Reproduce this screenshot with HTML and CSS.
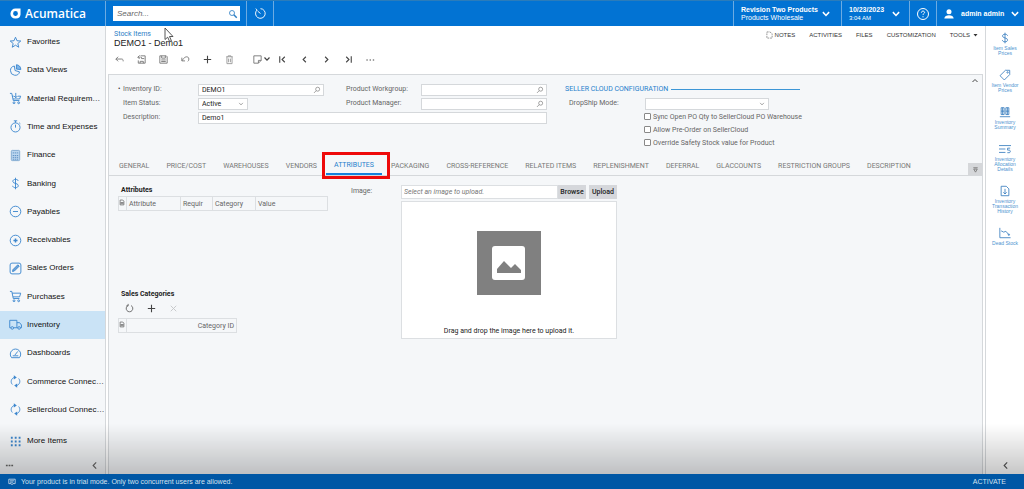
FILE: index.html
```html
<!DOCTYPE html>
<html lang="en">
<head>
<meta charset="utf-8">
<title>DEMO1 - Demo1 | Stock Items</title>
<link rel="stylesheet" href="styles.css">
</head>
<body>
<svg class="sprite" aria-hidden="true">
  <symbol id="chev-down" viewBox="0 0 8 8"><path d="M1.5 2.5 4 5.2l2.5-2.7"/></symbol>
  <symbol id="chev-left" viewBox="0 0 8 8"><path d="M5.5 1.2 2.8 4l2.7 2.8"/></symbol>
  <symbol id="lens" viewBox="0 0 12 12"><circle cx="7" cy="4.8" r="3"/><path d="M4.8 7 1.5 10.4"/></symbol>
  <symbol id="cart" viewBox="0 0 14 14"><path d="M1 1.5h2l1.6 7.7h6.6M3.4 3.4h9.2l-1.2 4H4.3"/><circle cx="5.4" cy="11.6" r="1"/><circle cx="10.4" cy="11.6" r="1"/></symbol>
  <symbol id="dollar" viewBox="0 0 14 14"><path d="M10 4.3C9.6 3 8.500 2.600 7 2.600c-1.700 0-2.900.8-2.900 2.100C4.100 7.600 10 6.200 10 9.300c0 1.300-1.200 2.200-3 2.200S4.200 10.800 3.900 9.500M7 .8v12.400"/></symbol>
  <symbol id="sync" viewBox="0 0 14 14"><path d="M3.600 10.200A4.600 4.600 0 0 1 5.800 2.600M10.400 3.800a4.600 4.600 0 0 1-2.200 7.600"/><path class="solid" d="M5.200.4 8.400 2.600 5.200 4.800zM8.800 9.200 5.600 11.400l3.200 2.200z"/></symbol>
  <symbol id="plus" viewBox="0 0 12 12"><path d="M6 2v8M2 6h8"/></symbol>
  <symbol id="grid-file" viewBox="0 0 8 8"><path d="M1.500.7h3.500l1.500 1.500v5h-5zM2 4h4M2 5.500h4"/></symbol>
</svg>

<header class="topbar">
  <a class="brand" href="#">
    <svg class="brand-mark" viewBox="0 0 12 12"><path d="M6 .5h5.500V7A5 5 0 0 1 6.500 11.500h-1A5 5 0 0 1 .5 6.500V6A5.500 5.500 0 0 1 6 .5zM6 3.400A2.600 2.600 0 0 0 3.400 6v.3A2.300 2.300 0 0 0 5.700 8.600h.6A2.300 2.300 0 0 0 8.600 6.300V6A2.600 2.600 0 0 0 6 3.400z" fill="#fff" fill-rule="evenodd"/></svg>
    <span>Acumatica</span>
  </a>
  <div class="search-cell">
    <label class="search">
      <input type="text" placeholder="Search..." aria-label="Search">
      <svg class="ic" viewBox="0 0 12 12"><circle cx="4.800" cy="4.800" r="3"/><path d="M7 7l3.500 3.500" stroke-width="1.800"/></svg>
    </label>
  </div>
  <button class="top-cell history" aria-label="History"><svg class="ic" viewBox="0 0 14 14"><path d="M3.300 3.200A5.200 5.200 0 1 0 7 1.800M7 7 4 4.500M1.800 1.800l1.700 1.500"/></svg></button>
  <div class="spacer"></div>
  <button class="top-cell company"><span class="two-line"><b>Revision Two Products</b><span>Products Wholesale</span></span><svg class="ic chev"><use href="#chev-down"/></svg></button>
  <button class="top-cell clock"><span class="two-line"><b>10/23/2023</b><span>3:04 AM</span></span><svg class="ic chev"><use href="#chev-down"/></svg></button>
  <button class="top-cell help" aria-label="Help"><svg class="ic" viewBox="0 0 14 14"><circle cx="7" cy="7" r="5.500"/><path d="M5.400 5.700c0-1 .7-1.600 1.600-1.600s1.600.6 1.600 1.400c0 1-1.600 1.200-1.600 2.400M7 9.200v1.100"/></svg></button>
  <button class="top-cell user"><svg class="ic person" viewBox="0 0 12 12"><circle cx="6" cy="3.700" r="2.500" fill="#fff"/><path d="M1.300 10.500c0-4.500 9.400-4.500 9.400 0z" fill="#fff"/></svg><b>admin admin</b><svg class="ic chev"><use href="#chev-down"/></svg></button>
</header>

<div class="workspace">
  <nav class="sidebar">
    <div class="side-list">
      <a href="#"><svg class="ic" viewBox="0 0 14 14"><path d="m7 1.300 1.600 3.800 4.100.3-3.200 2.700 1 4L7 9.900l-3.500 2.200 1-4-3.200-2.700 4.100-.3z"/></svg><span>Favorites</span></a>
      <a href="#"><svg class="ic" viewBox="0 0 14 14"><path d="M5.800 2.200a5 5 0 1 0 5.600 6.300L6.500 7z"/><path d="M8 .8a5 5 0 0 1 4.700 5.200L8 5.500z" fill="#7db5ea"/></svg><span>Data Views</span></a>
      <a href="#"><svg class="ic" viewBox="0 0 14 14"><path d="M1 1.500h2l1.600 7.700h6.600M3.400 4.500h1.600M9.500 4.500h3.100l-1.200 3H4.300M7.300 1v5M5.500 4.300l1.800 1.900 1.800-1.900"/><circle cx="5.400" cy="11.600" r="1"/><circle cx="10.400" cy="11.600" r="1"/></svg><span>Material Requirem…</span></a>
      <a href="#"><svg class="ic" viewBox="0 0 14 14"><circle cx="7" cy="8" r="4.900"/><path d="M5.200.9h3.600M7 1v2M7 5v3.200M11 3l1.200 1"/></svg><span>Time and Expenses</span></a>
      <a href="#"><svg class="ic" viewBox="0 0 14 14"><rect x="2.500" y="1.500" width="9" height="11" rx="1" fill="#bcd6ef" stroke="#7fa9d0"/><path d="M4 4.200h6M4 7h6M4 9h6M4 11h6" stroke="#5c90c4" stroke-dasharray="1.500 .7"/></svg><span>Finance</span></a>
      <a href="#"><svg class="ic"><use href="#dollar"/></svg><span>Banking</span></a>
      <a href="#"><svg class="ic" viewBox="0 0 14 14"><circle cx="7" cy="7" r="5.700"/><path d="M4.300 7h5.400"/></svg><span>Payables</span></a>
      <a href="#"><svg class="ic" viewBox="0 0 14 14"><circle cx="7" cy="7" r="5.700"/><path d="M4.800 7h4.400M7 4.800v4.400" stroke-width="1.600"/></svg><span>Receivables</span></a>
      <a href="#"><svg class="ic" viewBox="0 0 14 14"><rect x="1.200" y="1.200" width="11.600" height="11.600" rx="2"/><path d="m3.800 10.200.5-2L9.500 3l1.500 1.500-5.200 5.200z" fill="#6fa4d8"/></svg><span>Sales Orders</span></a>
      <a href="#"><svg class="ic"><use href="#cart"/></svg><span>Purchases</span></a>
      <a href="#" class="current"><svg class="ic" viewBox="0 0 14 14"><path d="M2 10.500H.8v-8h7.700v8H5M8.500 5h2.900l2 2.500v3h-1M8.500 10.500h1"/><circle cx="3.500" cy="10.700" r="1.400"/><circle cx="10.900" cy="10.700" r="1.400"/></svg><span>Inventory</span></a>
      <a href="#"><svg class="ic" viewBox="0 0 14 14"><path d="M2.800 11.500a5.600 5.600 0 1 1 8.400 0zM6.300 8.700l3.200-4M4 9.500h6"/></svg><span>Dashboards</span></a>
      <a href="#"><svg class="ic"><use href="#sync"/></svg><span>Commerce Connec…</span></a>
      <a href="#"><svg class="ic"><use href="#sync"/></svg><span>Sellercloud Connec…</span></a>
    </div>
    <a href="#" class="more"><svg class="ic" viewBox="0 0 14 14"><path d="M2 3h11M2 7h11M2 11h11" stroke-width="2" stroke-dasharray="2 2.200"/></svg><span>More Items</span></a>
    <div class="side-foot">
      <button aria-label="Menu options"><svg class="ic" viewBox="0 0 10 8"><path d="M1 4h8" stroke-width="1.800" stroke-dasharray="2 1"/></svg></button>
      <button aria-label="Collapse menu"><svg class="ic"><use href="#chev-left"/></svg></button>
    </div>
  </nav>

  <main class="main">
    <div class="page-head">
      <div class="titles">
        <a href="#">Stock Items</a>
        <h1>DEMO1 - Demo1</h1>
      </div>
      <div class="page-menu">
        <button class="notes"><svg class="ic" viewBox="0 0 8 8"><path d="M1 .5h3.500l2.500 2v5H1z" stroke-dasharray="2 1"/></svg>NOTES</button>
        <button>ACTIVITIES</button>
        <button>FILES</button>
        <button>CUSTOMIZATION</button>
        <button class="tools">TOOLS <svg class="ic" viewBox="0 0 7 8"><path class="solid" d="M1.500 3h4L3.500 5.500z"/></svg></button>
      </div>
      <svg class="pointer" viewBox="0 0 10 16"><path d="M1 1v11.500l2.700-2.300 1.900 4.300 1.800-.8-1.900-4.200H9z" fill="#fff" stroke="#444" stroke-width=".9"/></svg>
    </div>

    <div class="toolbar">
      <button aria-label="Back"><svg class="ic" viewBox="0 0 12 12"><path d="M4.500 3 2 5.500 4.500 8M2 5.500h6.500c1 0 1.500.7 1.500 2.500"/></svg></button>
      <button aria-label="Save and close"><svg class="ic" viewBox="0 0 12 12"><path d="M5 2h5v8H2.500V7M6 3.500v1.500h3M4.500 10V8h3.500v2M4 1.500 2 3.500l2 2M2 3.500h3"/></svg></button>
      <button aria-label="Save"><svg class="ic" viewBox="0 0 12 12"><path d="M2 2h7l1 1v7H2zM4 2v2.500h4V2M3.500 6.500h5M3.500 8.200h5"/></svg></button>
      <button aria-label="Undo"><svg class="ic" viewBox="0 0 12 12"><path d="M2 4v3.500h3.500M2.300 7.300C5 2 9.500 2 9.700 5.500c0 1.200-.5 2-1.200 2.500"/></svg></button>
      <button aria-label="Add"><svg class="ic strong"><use href="#plus"/></svg></button>
      <button aria-label="Delete"><svg class="ic pale" viewBox="0 0 12 12"><path d="M2.500 3h7M4.500 3V2h3v1M3.200 3v7.500h5.600V3M5 5v4M7 5v4"/></svg></button>
      <button class="wide" aria-label="Clipboard"><svg class="ic" viewBox="0 0 12 12"><path d="M2 2h8v5l-3 3H2zM10 7H7v3"/></svg><svg class="ic tiny strong"><use href="#chev-down"/></svg></button>
      <button aria-label="First"><svg class="ic strong" viewBox="0 0 12 12"><path d="M3 2.500v7M8.500 3l-3 3 3 3"/></svg></button>
      <button aria-label="Previous"><svg class="ic strong" viewBox="0 0 12 12"><path d="m7.500 3-3 3 3 3"/></svg></button>
      <button aria-label="Next"><svg class="ic strong" viewBox="0 0 12 12"><path d="m4.500 3 3 3-3 3"/></svg></button>
      <button aria-label="Last"><svg class="ic strong" viewBox="0 0 12 12"><path d="M9 2.500v7M3.500 3l3 3-3 3"/></svg></button>
      <button aria-label="More"><svg class="ic strong" viewBox="0 0 12 12"><path d="M1.500 6.500h9" stroke-dasharray="1.500 2"/></svg></button>
    </div>

    <section class="panel">
      <form class="summary">
        <div class="fields">
          <label for="inv" class="required">Inventory ID:</label>
          <span class="field"><input id="inv" type="text" value="DEMO1"><svg class="ic"><use href="#lens"/></svg></span>
          <label for="wg" class="second">Product Workgroup:</label>
          <span class="field"><input id="wg" type="text"><svg class="ic"><use href="#lens"/></svg></span>
          <label for="st">Item Status:</label>
          <span class="field short"><select id="st"><option>Active</option></select><svg class="ic arrow"><use href="#chev-down"/></svg></span>
          <label for="pm" class="second">Product Manager:</label>
          <span class="field"><input id="pm" type="text"><svg class="ic"><use href="#lens"/></svg></span>
          <label for="ds">Description:</label>
          <span class="field full"><input id="ds" type="text" value="Demo1"></span>
        </div>
        <div class="seller">
          <h2>SELLER CLOUD CONFIGURATION</h2>
          <div class="drop"><label for="dm">DropShip Mode:</label><span class="field"><select id="dm"><option></option></select><svg class="ic arrow"><use href="#chev-down"/></svg></span></div>
          <div class="checks">
            <label><input type="checkbox">Sync Open PO Qty to SellerCloud PO Warehouse</label>
            <label><input type="checkbox">Allow Pre-Order on SellerCloud</label>
            <label><input type="checkbox">Override Safety Stock value for Product</label>
          </div>
        </div>
        <button type="button" class="fold" aria-label="Collapse summary"><svg class="ic" viewBox="0 0 8 8"><path d="M1.500 5 4 2.500 6.500 5"/></svg></button>
      </form>

      <div class="tabs">
        <button>GENERAL</button><button>PRICE/COST</button><button>WAREHOUSES</button><button>VENDORS</button><button class="active">ATTRIBUTES<span class="marker"></span></button><button>PACKAGING</button><button>CROSS-REFERENCE</button><button>RELATED ITEMS</button><button>REPLENISHMENT</button><button>DEFERRAL</button><button>GLACCOUNTS</button><button>RESTRICTION GROUPS</button><button>DESCRIPTION</button>
        <button class="tab-list" aria-label="All tabs"><svg class="ic" viewBox="0 0 8 8"><path d="M1.500 2h5M2 3.500h4L4 7z"/></svg></button>
      </div>

      <div class="content">
        <div class="lists">
          <h3>Attributes</h3>
          <table class="attributes">
            <thead><tr><th class="mark"><svg class="ic"><use href="#grid-file"/></svg></th><th class="a">Attribute</th><th class="r">Requir</th><th class="c">Category</th><th>Value</th></tr></thead>
          </table>
          <h3 class="sales">Sales Categories</h3>
          <div class="mini-tools">
            <button aria-label="Refresh"><svg class="ic" viewBox="0 0 12 12"><path d="M4.300 2.800a3.600 3.600 0 1 0 3.400 0M4.500 1v2.200H2.500"/></svg></button>
            <button aria-label="Add row"><svg class="ic strong"><use href="#plus"/></svg></button>
            <button aria-label="Delete row" disabled><svg class="ic" viewBox="0 0 12 12"><path d="m3 3 6 6M9 3 3 9"/></svg></button>
          </div>
          <table class="categories">
            <thead><tr><th class="mark"><svg class="ic"><use href="#grid-file"/></svg></th><th class="id">Category ID</th></tr></thead>
          </table>
        </div>
        <label class="image-label" for="img">Image:</label>
        <div class="uploader">
          <div class="upload-row">
            <input id="img" type="text" placeholder="Select an image to upload.">
            <button>Browse</button>
            <button class="upload">Upload</button>
          </div>
          <div class="dropzone">
            <svg class="picture" viewBox="0 0 64 64"><path fill="#808080" d="M0 0h64v64H0z"/><rect x="15" y="15" width="33" height="34" rx="3" fill="#fff"/><path fill="#808080" d="M20 42v-4l7-8 7 7 4-4 6 6v3z"/></svg>
            <p>Drag and drop the image here to upload it.</p>
          </div>
        </div>
      </div>
    </section>
  </main>

  <aside class="rail">
    <a href="#"><svg class="ic"><use href="#dollar"/></svg><span>Item Sales Prices</span></a>
    <a href="#"><svg class="ic" viewBox="0 0 14 14"><path d="M1.200 7.800 7.500 1.500h5v5L6.200 12.800z"/><circle cx="10" cy="4" r=".8"/></svg><span>Item Vendor Prices</span></a>
    <a href="#"><svg class="ic" viewBox="0 0 14 14"><path d="M1 12.500h12M2.500 2h3.500v8H2.500zM8 2h3.500v8H8zM2.500 6h3.500M8 6h3.500M4.200 2v8M9.800 2v8"/></svg><span>Inventory Summary</span></a>
    <a href="#"><svg class="ic" viewBox="0 0 14 14"><path d="M0 3h14M0 7h7.500M0 11h7.500M13 6h-3v2.300h2c1.600 0 1.600 3 0 3h-2.300"/></svg><span>Inventory Allocation Details</span></a>
    <a href="#"><svg class="ic" viewBox="0 0 14 14"><path d="M2.500 1.500h6l3 3v8h-9zM7 4.500v6M5 8.500l2 2 2-2"/></svg><span>Inventory Transaction History</span></a>
    <a href="#"><svg class="ic" viewBox="0 0 14 14"><path d="M1 1v11.500h12.500M2.500 4.500l3 1.500 2.500-1 3.500 4"/><circle cx="11.500" cy="9" r=".8"/></svg><span>Dead Stock</span></a>
    <button class="rail-foot" aria-label="Collapse panel"><svg class="ic"><use href="#chev-left"/></svg></button>
  </aside>
</div>

<footer class="statusbar">
  <svg class="ic" viewBox="0 0 10 10"><path d="M1 1.500h8v5.500H6L5 8.500 4 7H1zM2.500 3.500h5M2.500 5.200h4"/></svg>
  <span>Your product is in trial mode. Only two concurrent users are allowed.</span>
  <a href="#">ACTIVATE</a>
</footer>
<div class="shade"></div>
</body>
</html>
```
FILE: styles.css
```css
* { box-sizing: border-box; }

body {
  margin: 0;
  height: 100vh;
  display: flex;
  flex-direction: column;
  overflow: hidden;
  background: #fff;
  color: #222;
  font: 7px/8px Roboto, "Liberation Sans", sans-serif;
}

a { color: inherit; text-decoration: none; }
h1, h2, h3, p { margin: 0; font-weight: normal; }
button, input, select { margin: 0; padding: 0; border: 0; background: none; color: inherit; font: inherit; }
button { display: flex; align-items: center; }

.sprite { position: absolute; width: 0; height: 0; }
.ic { display: block; flex: none; fill: none; stroke: currentColor; stroke-width: 1; }
.solid { fill: currentColor; stroke: none; }

/* top bar */
.topbar {
  flex: none;
  display: flex;
  height: 26px;
  background: #0273d3;
  border-top: 1px solid #2b7cba;
  color: #fff;
  font-family: "Liberation Sans", Arial, sans-serif;
}
.brand {
  width: 106px;
  padding-left: 10px;
  display: flex;
  align-items: center;
  gap: 4px;
  border-right: 1px solid #6cabe2;
  font: 600 12px/14px "Open Sans", sans-serif;
}
.brand-mark { width: 11px; height: 11px; }
.search-cell { width: 141px; padding: 0 7px; display: flex; align-items: center; border-right: 1px solid #6cabe2; }
.search { flex: 1; height: 15px; display: flex; align-items: center; background: #fff; padding: 0 2px 0 4px; }
.search input { flex: 1; min-width: 0; font-size: 8px; font-style: italic; color: #555; outline: 0; }
.search input::placeholder { color: #666; }
.search .ic { width: 10px; height: 10px; color: #2f7fc4; }
.top-cell { border-right: 1px solid #6cabe2; }
.top-cell .chev { width: 10px; height: 10px; margin-left: auto; stroke-width: 1.2; }
.history { width: 27px; justify-content: center; }
.history .ic { width: 13px; height: 13px; }
.help .ic { width: 14px; height: 14px; }
.spacer { flex: 1; border-right: 1px solid #6cabe2; }
.two-line { display: flex; flex-direction: column; text-align: left; font-size: 7px; line-height: 8px; white-space: nowrap; }
.company { width: 108px; padding: 0 10px 0 7px; }
.clock { width: 68px; padding: 0 8px 0 7px; }
.clock .two-line span { font-size: 6px; }
.help { width: 27px; justify-content: center; }
.user { width: 87px; padding: 0 5px 0 6px; gap: 6px; border-right: 0; white-space: nowrap; font-size: 7px; }
.person { width: 12px; height: 12px; stroke: none; }

.workspace { flex: 1; min-height: 0; display: flex; }

/* sidebar */
.sidebar {
  flex: none;
  width: 106px;
  padding-top: 2px;
  display: flex;
  flex-direction: column;
  background: #f5f7f9;
  border-right: 1px solid #d5d8db;
  font: 8px/10px "Liberation Sans", Arial, sans-serif;
  color: #111;
}
.side-list { flex: 1; display: flex; flex-direction: column; }
.sidebar a { display: flex; align-items: center; gap: 5px; padding-left: 9px; white-space: nowrap; }
.side-list a { flex: 1; }
.sidebar a .ic { width: 13px; height: 13px; color: #3d87ce; }
.sidebar a.current { background: #cae3f6; }
.sidebar a.more { height: 32px; padding-top: 2px; }
.side-foot { height: 18px; padding: 0 6px 0 5px; display: flex; justify-content: space-between; align-items: center; color: #666; }
.side-foot .ic { width: 9px; height: 9px; }

/* page */
.main { flex: 1; min-width: 0; padding: 0 2px; display: flex; flex-direction: column; }
.page-head { position: relative; display: flex; justify-content: space-between; height: 23px; padding: 4px 4px 0 6px; }
.titles a { display: block; color: #2d80c6; font-size: 7px; line-height: 8px; }
.titles h1 { font: 9px/11px "Liberation Sans", Arial, sans-serif; color: #222; }
.pointer { position: absolute; left: 56px; top: 1px; width: 10px; height: 16px; }
.page-menu { display: flex; gap: 14px; height: 10px; font: 6px/8px "Liberation Sans", Arial, sans-serif; color: #333; }
.page-menu .ic { width: 7px; height: 8px; }
.page-menu .notes .ic { color: #888; }
.page-menu button { gap: 2px; }
.toolbar { display: flex; height: 25px; align-items: center; padding-bottom: 5px; color: #777; }
.toolbar button { width: 22px; height: 16px; justify-content: center; }
.toolbar button.wide { width: 31px; justify-content: flex-end; }
.toolbar .ic { width: 11px; height: 11px; }
.toolbar .ic.tiny { width: 8px; height: 8px; }
.ic.strong { color: #444; stroke-width: 1.2; }
.toolbar .ic.pale { color: #999; }

.panel { flex: 1; min-height: 0; display: flex; flex-direction: column; background: #f5f7f9; border: 1px solid #d5d8db; border-bottom: 0; color: #666; }

/* summary form */
.summary { display: flex; height: 82px; padding: 9px 3px 0 9px; }
.fields { display: grid; grid-template-columns: 80px 126px 97px 126px; grid-auto-rows: 12px; row-gap: 2px; align-content: start; }
.fields label { padding-left: 5px; line-height: 10px; white-space: nowrap; }
.fields .required { padding-left: 0; }
.required::before { content: "•"; display: inline-block; width: 5px; color: #333; }
.fields .second { padding-left: 22px; }
.field { display: grid; height: 12px; background: #fff; border: 1px solid #d5d8db; color: #222; }
.field > * { grid-area: 1 / 1; }
.field input, .field select { width: 100%; height: 10px; padding: 0 3px; appearance: none; }
.field .ic { width: 8px; height: 8px; justify-self: end; align-self: center; margin-right: 2px; color: #777; pointer-events: none; }
.field .arrow { width: 6px; height: 6px; margin-right: 3px; color: #888; }
.field.short { width: 50px; }
.field.full { grid-column: 2 / 5; }
.seller { width: 235px; margin-left: 18px; }
.seller h2 { display: flex; align-items: center; gap: 3px; height: 10px; margin-bottom: 4px; font-size: 7px; line-height: 10px; color: #2580cc; white-space: nowrap; }
.seller h2::after { content: ""; flex: 1; height: 1px; background: #3c96d6; }
.drop { display: flex; padding-left: 4px; }
.drop label { width: 76px; line-height: 10px; }
.drop .field { width: 124px; }
.checks { display: flex; flex-direction: column; align-items: flex-start; padding-left: 79px; }
.checks label { display: flex; align-items: center; gap: 2px; height: 13px; white-space: nowrap; }
.checks input { flex: none; appearance: none; width: 7px; height: 7px; border: 1px solid #888; border-radius: 1px; background: #fff; }
.fold { align-self: flex-start; height: 8px; margin: -7px 0 0 auto; color: #444; }
.fold .ic { width: 8px; height: 8px; }

/* tabs */
.tabs { display: flex; gap: 1px; height: 19px; padding-left: 2px; border-bottom: 1px solid #d5d8db; color: #777; }
.tabs button { height: 18px; padding: 0 8px; white-space: nowrap; }
.tabs .active { position: relative; color: #2580cc; border-bottom: 2px solid #1581dc; }
.marker { position: absolute; left: -4px; right: -8px; top: -5px; bottom: -6px; border: 3px solid #ee0a0a; pointer-events: none; }
.tabs .tab-list { margin-left: auto; width: 14px; height: 12px; align-self: flex-end; padding: 0; justify-content: center; background: #d5d7da; }
.tab-list .ic { width: 7px; height: 7px; }

/* attributes tab */
.content { display: flex; padding: 9px 9px 0; }
.lists { width: 233px; }
.lists h3 { padding-left: 3px; font-size: 7px; font-weight: bold; line-height: 10px; color: #222; }
.lists h3.sales { margin-top: 78px; }
table { border-collapse: collapse; table-layout: fixed; border: 1px solid #dcdfe2; }
th { height: 14px; padding: 0 2px; border: 1px solid #dcdfe2; text-align: left; font-weight: normal; line-height: 8px; }
.attributes { width: 210px; margin-top: 1px; }
.categories { width: 119px; }
th.mark { width: 8px; padding: 0; }
th.mark .ic { width: 6px; height: 7px; margin-bottom: 3px; }
th.a { width: 54px; }
th.r { width: 32px; }
th.c { width: 43px; }
th.id { text-align: right; }
.mini-tools { display: flex; height: 19px; align-items: center; }
.mini-tools button { width: 22px; justify-content: center; }
.mini-tools .ic { width: 11px; height: 11px; }
.mini-tools :disabled { color: #c4c6c8; }
.image-label { width: 50px; line-height: 12px; }
.uploader { width: 216px; }
.upload-row { display: flex; height: 14px; margin-bottom: 2px; }
.upload-row input { flex: 1; min-width: 0; padding: 0 2px; border: 1px solid #dcdfe2; background: #fff; font-style: italic; }
.upload-row input::placeholder { color: #777; }
.upload-row button { width: 28px; justify-content: center; background: #d5d7db; color: #222; font-weight: 500; }
.upload-row .upload { margin-left: 3px; }
.dropzone { display: flex; flex-direction: column; align-items: center; height: 138px; padding: 29px 0 2px; border: 1px solid #dcdfe2; background: #fff; color: #222; }
.picture { width: 64px; height: 64px; }
.dropzone p { margin-top: auto; line-height: 10px; }

/* right rail */
.rail { flex: none; width: 39px; padding: 6px 0 4px; display: flex; flex-direction: column; align-items: center; gap: 13px; border-left: 1px solid #d5d8db; color: #4d93d0; font: 5px/5px "Liberation Sans", Arial, sans-serif; text-align: center; }
.rail a { display: flex; flex-direction: column; align-items: center; gap: 2px; width: 30px; }
.rail a .ic { width: 12px; height: 12px; color: #3c80c0; }
.rail-foot { margin-top: auto; color: #555; }
.rail-foot .ic { width: 9px; height: 9px; }

/* status bar */
.statusbar { flex: none; display: flex; align-items: center; gap: 5px; height: 15px; padding: 0 18px 0 8px; background: #0057a5; color: #d3e1ee; font: 7px/9px "Liberation Sans", Arial, sans-serif; }
.statusbar .ic { width: 8px; height: 8px; }
.statusbar a { margin-left: auto; }

.shade { position: fixed; left: 0; right: 0; bottom: 15px; height: 50px; background: linear-gradient(rgba(0, 0, 0, 0), rgba(0, 0, 0, .22)); pointer-events: none; }
```
